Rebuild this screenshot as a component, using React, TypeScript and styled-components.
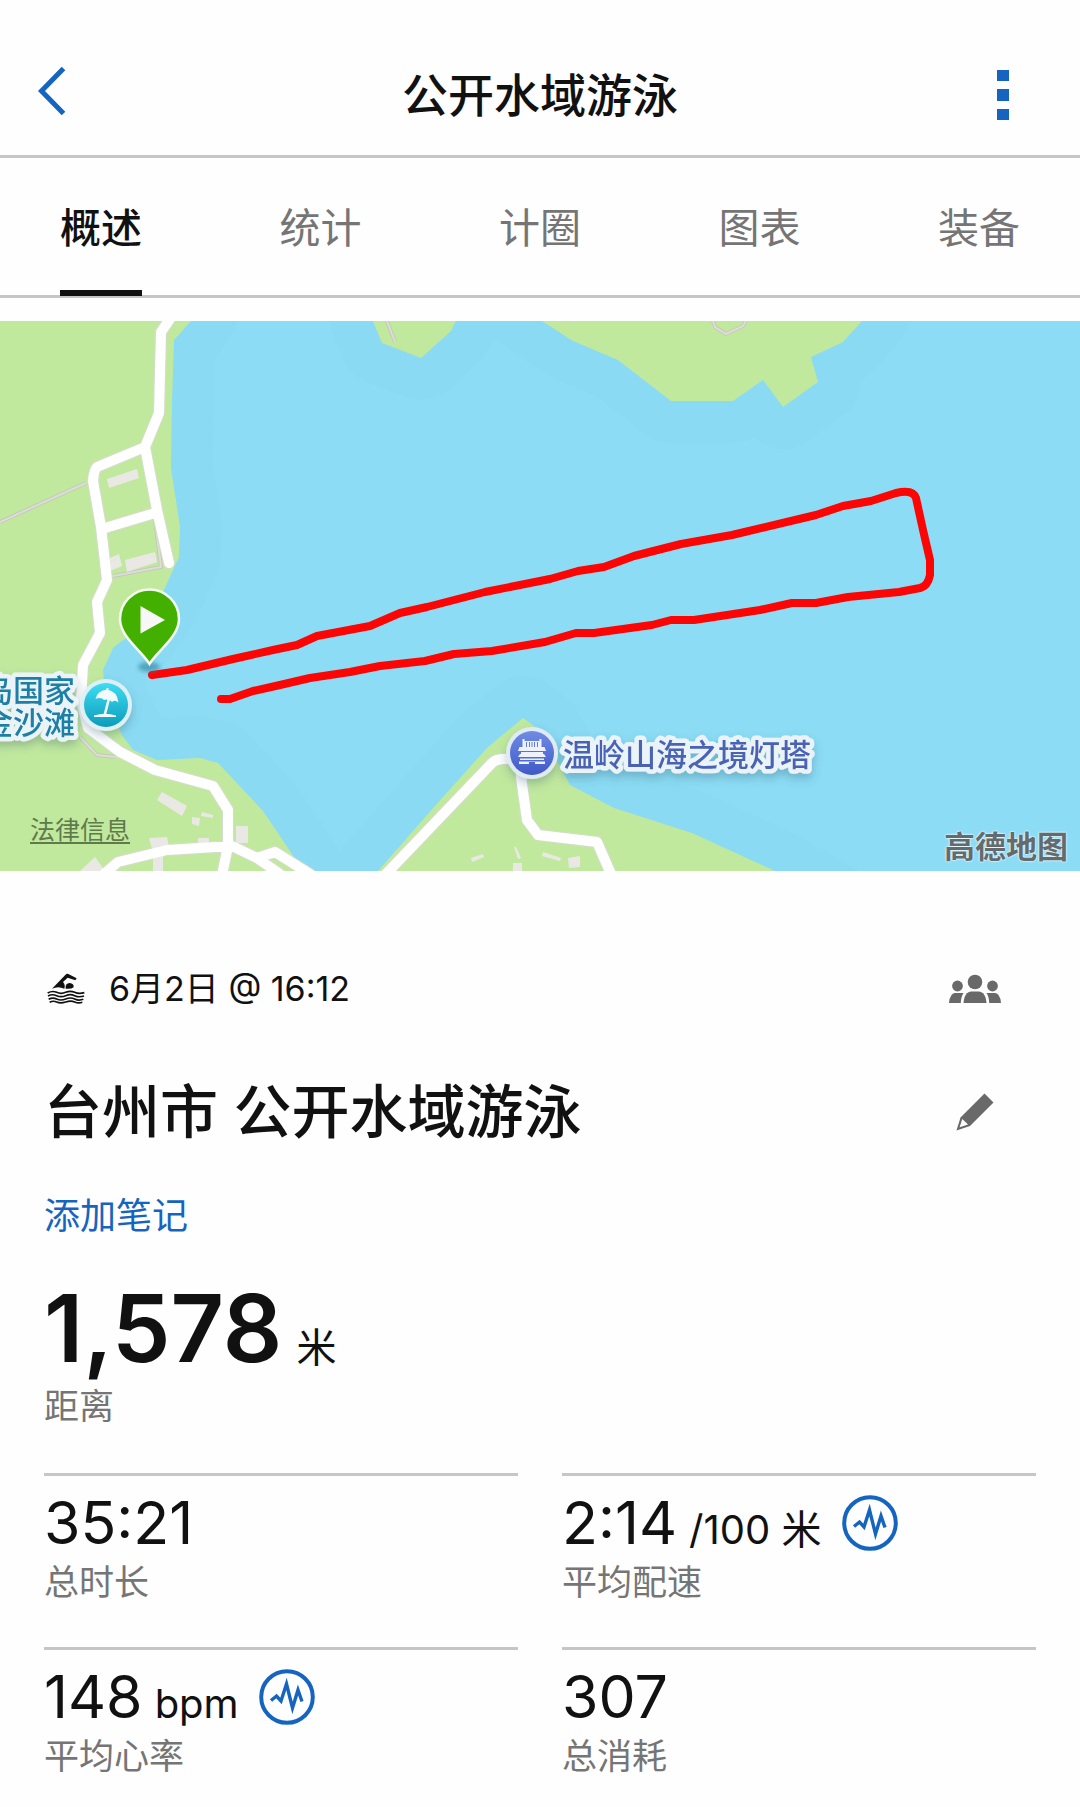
import React, { useState } from 'react';
import styled, { createGlobalStyle } from 'styled-components';

const ink = '#111111';
const muted = '#757575';
const blue = '#1565c0';
const rule = '#c6c6c6';
const fontStack = `Inter, 'Noto Sans CJK SC', sans-serif`;

const GlobalStyle = createGlobalStyle`
  *, *::before, *::after { box-sizing: border-box; }
  body {
    margin: 0;
    background: #fefefe;
    color: ${ink};
    font-family: ${fontStack};
  }
  button {
    padding: 0;
    border: 0;
    background: none;
    color: inherit;
    font: inherit;
    cursor: pointer;
  }
  svg { display: block; }
`;

const Header = styled.header`
  display: grid;
  grid-template-columns: 100px 1fr 100px;
  align-items: center;
  padding: 35px 28px 0;
  border-bottom: 3px solid ${rule};
`;

const HeaderButton = styled.button<{ $end?: boolean }>`
  && {
    display: flex;
    justify-content: ${(p) => (p.$end ? 'flex-end' : 'flex-start')};
    padding: ${(p) => (p.$end ? '0 43px 0 0' : '0 0 0 9px')};
    color: ${blue};
  }
`;

const ScreenTitle = styled.h1`
  margin: 0;
  font-size: 46px;
  font-weight: 500;
  line-height: 120px;
  text-align: center;
`;

const Tabs = styled.nav`
  display: flex;
  justify-content: space-between;
  padding: 0 60px;
  border-bottom: 3px solid ${rule};
`;

const Tab = styled.button<{ $active: boolean }>`
  && {
    padding: 40px 0 32px;
    border-bottom: 6px solid ${(p) => (p.$active ? ink : 'transparent')};
    margin-bottom: -1px;
    color: ${(p) => (p.$active ? ink : muted)};
    font-size: 41px;
    font-weight: ${(p) => (p.$active ? 500 : 400)};
    line-height: 60px;
  }
`;

const MapPanel = styled.section`
  position: relative;
  margin-top: 23px;
`;

const MapCanvas = styled.svg`
  width: 100%;
  height: auto;
`;

const PoiText = styled.text<{ $fill: string }>`
  font-family: ${fontStack};
  font-size: 31px;
  font-weight: 500;
  fill: ${(p) => p.$fill};
  stroke: #e9f3f8;
  stroke-width: 9px;
  stroke-linejoin: round;
  paint-order: stroke;
`;

const LegalLink = styled.a`
  position: absolute;
  left: 30px;
  bottom: 25px;
  color: #5f7a4b;
  font-size: 25px;
  line-height: 32px;
  text-decoration: underline;
  text-decoration-thickness: 2px;
  text-underline-offset: 3px;
`;

const MapBrand = styled.span`
  position: absolute;
  right: 12px;
  bottom: 6px;
  color: #646b6e;
  font-size: 31px;
  font-weight: 700;
  line-height: 36px;
  text-shadow: 0 0 2px #ffffff, 0 0 2px #ffffff;
`;

const Summary = styled.main`
  padding: 94px 44px 0;
`;

const Row = styled.div<{ $gap: number }>`
  display: flex;
  align-items: center;
  justify-content: space-between;
  margin-bottom: ${(p) => p.$gap}px;
  padding-right: 31px;
`;

const DateLine = styled.div`
  display: flex;
  align-items: center;
  gap: 24px;
  padding-left: 3px;
  font-size: 34px;
  line-height: 48px;
`;

const IconButton = styled.button`
  display: flex;
  justify-content: center;
  width: 60px;
  && {
    color: #696969;
  }
`;

const ActivityName = styled.h2`
  margin: 0;
  font-size: 58px;
  font-weight: 500;
  line-height: 80px;
`;

const NoteButton = styled.button`
  && {
    display: block;
    color: ${blue};
    font-size: 36px;
    line-height: 48px;
  }
`;

const Distance = styled.dl`
  display: flex;
  flex-direction: column-reverse;
  gap: 6px;
  margin: 40px 0 43px;
`;

const DistanceValue = styled.dd`
  display: flex;
  align-items: baseline;
  gap: 14px;
  margin: 0;
  font-size: 93px;
  font-weight: 600;
  line-height: 96px;
`;

const Stats = styled.dl`
  display: grid;
  grid-template-columns: 1fr 1fr;
  gap: 41px 44px;
  margin: 0;
  padding-bottom: 20px;
`;

const Stat = styled.div`
  display: flex;
  flex-direction: column-reverse;
  padding-top: 12px;
  border-top: 3px solid ${rule};
`;

const Label = styled.dt`
  color: ${muted};
  font-size: 35px;
  line-height: 48px;
`;

const StatValue = styled.dd`
  display: flex;
  align-items: center;
  gap: 20px;
  margin: 0;
  font-size: 59px;
  line-height: 70px;
`;

const Figure = styled.span`
  display: flex;
  align-items: baseline;
  gap: 12px;
`;

const Unit = styled.span`
  font-size: 40px;
  font-weight: 400;
  line-height: 48px;
`;

const BackIcon = () => (
  <svg width="30" height="58" viewBox="0 0 30 58" fill="none" aria-hidden="true">
    <path d="M26.500 2.500 4.500 25l22 22.500" stroke="currentColor" strokeWidth="5" />
  </svg>
);

const MoreIcon = () => (
  <svg width="12" height="52" viewBox="0 0 12 52" fill="currentColor" aria-hidden="true">
    <path d="M0 1h12v11H0zM0 20h12v12H0zM0 40h12v11H0z" />
  </svg>
);

const SwimIcon = () => (
  <svg width="38" height="32" viewBox="35 37 114 96" fill="none" aria-hidden="true">
    <path d="M50 84 92 41q3-3 7-1l25 13-4 6-23-8-14 13q8 9 4 20-18-9-37 0Z" fill={ink} />
    <path d="M91 84q-2-16 12-17 13 1 12 13-8 6-24 4Z" fill={ink} />
    <g stroke={ink} strokeWidth="5">
      <path d="M37 97q14-8 27-2t27 0 27 0 29 1" />
      <path d="M38 106q13-7 26-1t27 0 27 0 28 1" />
      <path d="M40 116q12-7 24-1t27 0 27 0 26 1" />
      <path d="M43 125q10-6 21-1t27 0 27 0 23 1" />
    </g>
  </svg>
);

const PeopleIcon = () => (
  <svg width="54" height="30" viewBox="0 0 54 30" fill="currentColor" aria-hidden="true">
    <circle cx="27" cy="8" r="7.300" />
    <circle cx="9.500" cy="12" r="5.400" />
    <circle cx="44.500" cy="12" r="5.400" />
    <path d="M15.500 29q.5-7 3.500-9.800 2-1.700 4-1.700h8q2 0 4 1.700Q38 22 38.500 29Z" />
    <path d="M1 29q.3-5 2.500-8 1.500-2 3.500-2h8.500Q13 22.500 12.800 29Z" />
    <path d="M53 29q-.3-5-2.500-8-1.500-2-3.500-2h-8.500q2.500 3.500 2.700 10Z" />
  </svg>
);

const PencilIcon = () => (
  <svg width="38" height="38" viewBox="0 0 38 38" aria-hidden="true">
    <path d="M28.500.5 37.500 9.500 14 33 .5 37.500 4.500 24.500Z" fill="currentColor" />
    <path d="M6.300 26 12 31.500 3.600 34.300Z" fill="#ffffff" />
  </svg>
);

const PulseIcon = () => (
  <svg width="56" height="56" viewBox="0 0 56 56" fill="none" stroke="currentColor" aria-hidden="true">
    <circle cx="28" cy="28" r="25.800" strokeWidth="4" />
    <path d="m12 31.500 5.500-4.500 4.500 5L27.500 15l6 24 5.500-18 4 11.500" strokeWidth="3.400" />
  </svg>
);

const ChartButton = styled.button`
  && {
    color: ${blue};
  }
`;

const westShore =
  'M-60 260H220L191 321 174 340 172 400 171 468 180 527 179 557 163 592 150 615 135 634 123 640 113 648 103 670 106 700 122 735 133 750 157 760 200 758 218 763 263 811 288 848 303 871 330 920H-60Z';
const islet = 'M368 300 373 321 382 343 421 358 451 331 456 321 460 300Z';
const northShore =
  'M500 290 542 321 573 341 618 360 671 401H733L763 380 783 407 818 382 811 357 843 342 862 321 880 290Z';
const cape =
  'M340 920 378 871 442 798 487 748 523 718 541 731 570 785 614 808 692 833 775 871 860 920Z';
const land = [westShore, islet, northShore, cape].join('');

const roads = [
  'M170 319 161 332 159 413 145 447 97 467Q94 470 93 481L101 527 107 580 97 602 100 633 83 665 81 700 88 728 120 752 155 770 213 786 228 810V846L222 875',
  'M145 447 157 510 169 563',
  'M105 528 155 513',
  'M104 874 118 862 167 850 232 846 257 858 280 874',
  'M257 858 275 852 310 874',
  'M386 874 492 763Q496 759 504 759H520L521 777 527 820 538 835 597 842 611 874',
].join('');

const paths = [
  'M0 522 86 483',
  'M155 520 161 567 113 576',
  'M80 737 97 755 115 757',
  'M387 321 395 342',
  'M713 321 715 327 726 334 743 326 746 321',
].join('');

const buildings =
  'M107 479 137 469 139 478 109 488ZM110 558 119 554 122 566 110 571ZM125 560 155 552 157 562 127 572ZM162 792 187 806 182 816 157 800ZM192 817 200 818 199 826 192 824ZM202 812 213 815V818L201 816ZM236 826H248V843H236ZM198 838H209V849H198ZM149 838 167 837 169 847 153 852ZM153 854H163V871H153ZM95 857 105 871H80ZM471 858 483 854 484 857 472 862ZM514 847 516 847 521 858 518 859ZM513 863H522V871H513ZM543 852 561 858 560 861 542 856ZM568 858 580 856V867L569 868Z';

const track =
  'M152 675 187 670 233 659 273 650 297 645 317 636 370 626 400 613 427 607 485 592 550 579 578 571 604 567 634 556 681 544 732 535 816 515 843 506 871 501 896 493Q913 489 916 498L923 530 930 560V575Q928 586 920 588L899 592 848 597 816 603H792L760 610 694 620H671L652 625 594 633H576L545 642 492 651 454 654 425 661 380 666 350 672 310 678 280 685 253 691 230 699H221';

const SwimMap = () => (
  <MapCanvas viewBox="0 321 1080 550" role="img" aria-label="公开水域游泳路线">
    <defs>
      <linearGradient id="beach" x1="0" y1="0" x2="0" y2="1">
        <stop offset="0" stopColor="#3fdcf2" />
        <stop offset="1" stopColor="#0c9cba" />
      </linearGradient>
      <linearGradient id="sight" x1="0" y1="0" x2="0" y2="1">
        <stop offset="0" stopColor="#6f8ce4" />
        <stop offset="1" stopColor="#4059c8" />
      </linearGradient>
      <filter id="lift" x="-30%" y="-30%" width="160%" height="180%">
        <feDropShadow dx="0" dy="5" stdDeviation="5" floodColor="#2a5566" floodOpacity="0.300" />
      </filter>
      <filter id="soft" x="-50%" y="-50%" width="200%" height="200%">
        <feGaussianBlur stdDeviation="2" />
      </filter>
    </defs>
    <rect x="0" y="321" width="1080" height="550" fill="#8cdcf5" />
    <path d={land} fill="none" stroke="#8adaf3" strokeWidth="84" strokeLinejoin="round" />
    <path d={land} fill="#c1e99e" />
    <path d={paths} fill="none" stroke="#c4c9bb" strokeWidth="4" />
    <path d={paths} fill="none" stroke="#dcded4" strokeWidth="2" />
    <path d={roads} fill="none" stroke="#d6dccb" strokeWidth="12" strokeLinejoin="round" strokeLinecap="round" />
    <path d={buildings} fill="#eae8e4" />
    <path d={roads} fill="none" stroke="#ffffff" strokeWidth="10" strokeLinejoin="round" strokeLinecap="round" />
    <path d={track} fill="none" stroke="#fb0505" strokeWidth="8" strokeLinejoin="round" strokeLinecap="round" />

    <ellipse cx="149" cy="667" rx="11" ry="5" fill="#2f7f9b" opacity="0.600" filter="url(#soft)" />
    <path
      d="M149.500 664C142 651 120 637 120 619a29.500 29.500 0 0 1 59 0c0 18-22 32-29.500 45Z"
      fill="#43b000"
      stroke="#f4fbf0"
      strokeWidth="2.500"
    />
    <path d="M140.500 606 165 620 140.500 633.500Z" fill="#f7f7f7" />

    <g filter="url(#lift)">
      <PoiText $fill="#1f7fa5" textAnchor="end" x="75" y="702">
        岛国家
      </PoiText>
      <PoiText $fill="#1f7fa5" textAnchor="end" x="75" y="734">
        金沙滩
      </PoiText>
      <circle cx="106" cy="705" r="26" fill="#dff0f5" />
    </g>
    <circle cx="106" cy="705" r="22" fill="url(#beach)" />
    <g fill="#f2fbfd">
      <path d="M95.500 699Q97 690.500 107 689.500 117 691 118.500 702.500 115 699.500 112 702 109 698.500 104 700 101 696.500 95.500 699Z" />
      <path d="M107.500 699 110 699.500 106 715 103.500 714.500Z" />
      <path d="M94 715.500Q105 712 116 715.500V717H94Z" />
      <path d="M106.500 688h2v3h-2z" />
    </g>

    <g filter="url(#lift)">
      <PoiText $fill="#4a62b4" x="563" y="766">
        温岭山海之境灯塔
      </PoiText>
      <circle cx="532" cy="753" r="26" fill="#dfeaf4" />
    </g>
    <circle cx="532" cy="753" r="22" fill="url(#sight)" />
    <g fill="#eef2ff">
      <path d="M522.500 739h2v2h15v-2h2v8h3l1.500 4h-28l1.500-4h3Z" />
      <path d="M521 752h22v2h-22ZM518 757l2-3h24l2 3ZM520 758.500h24v1.500h-24Z" />
      <path d="M519 761.500h26v2.500h-10v-2h-6v2h-10Z" />
    </g>
    <path d="M526.500 742v5M529.500 742v5M532 742v5M534.500 742v5M537.500 742v5" stroke="#6079dc" strokeWidth="1" />
  </MapCanvas>
);

const tabNames = ['概述', '统计', '计圈', '图表', '装备'];

type StatItem = { label: string; value: string; unit?: string; chart?: boolean };

const stats: StatItem[] = [
  { label: '总时长', value: '35:21' },
  { label: '平均配速', value: '2:14', unit: '/100 米', chart: true },
  { label: '平均心率', value: '148', unit: 'bpm', chart: true },
  { label: '总消耗', value: '307' },
];

export default function App() {
  const [active, setActive] = useState(tabNames[0]);

  return (
    <>
      <GlobalStyle />
      <Header>
        <HeaderButton type="button" aria-label="返回">
          <BackIcon />
        </HeaderButton>
        <ScreenTitle>公开水域游泳</ScreenTitle>
        <HeaderButton type="button" aria-label="更多" $end>
          <MoreIcon />
        </HeaderButton>
      </Header>

      <Tabs role="tablist">
        {tabNames.map((name) => (
          <Tab
            key={name}
            type="button"
            role="tab"
            aria-selected={name === active}
            $active={name === active}
            onClick={() => setActive(name)}
          >
            {name}
          </Tab>
        ))}
      </Tabs>

      <MapPanel>
        <SwimMap />
        <LegalLink href="#legal">法律信息</LegalLink>
        <MapBrand>高德地图</MapBrand>
      </MapPanel>

      <Summary>
        <Row $gap={59}>
          <DateLine>
            <SwimIcon />
            <time>6月2日 @ 16:12</time>
          </DateLine>
          <IconButton type="button" aria-label="隐私设置">
            <PeopleIcon />
          </IconButton>
        </Row>
        <Row $gap={40}>
          <ActivityName>台州市 公开水域游泳</ActivityName>
          <IconButton type="button" aria-label="编辑名称">
            <PencilIcon />
          </IconButton>
        </Row>
        <NoteButton type="button">添加笔记</NoteButton>

        <Distance>
          <Label>距离</Label>
          <DistanceValue>
            1,578<Unit>米</Unit>
          </DistanceValue>
        </Distance>

        <Stats>
          {stats.map((s) => (
            <Stat key={s.label}>
              <Label>{s.label}</Label>
              <StatValue>
                <Figure>
                  {s.value}
                  {s.unit && <Unit>{s.unit}</Unit>}
                </Figure>
                {s.chart && (
                  <ChartButton type="button" aria-label={`${s.label}图表`}>
                    <PulseIcon />
                  </ChartButton>
                )}
              </StatValue>
            </Stat>
          ))}
        </Stats>
      </Summary>
    </>
  );
}
